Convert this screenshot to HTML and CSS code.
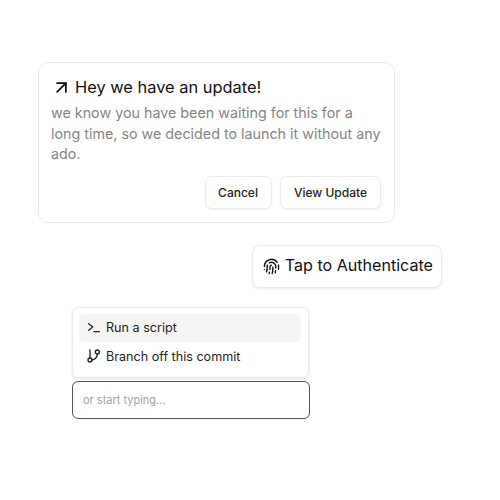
FILE: index.html
```html
<!DOCTYPE html>
<html lang="en">
<head>
    <meta charset="UTF-8">
    <title>Update dialog</title>
    <link rel="stylesheet" href="styles.css">
</head>
<body>
    <div class="page">
        <div class="card">
            <h2 class="card-title">
                <svg class="icon-arrow" viewBox="0 0 24 24"><path d="M7 7h10v10"/><path d="M7 17 17 7"/></svg>
                Hey we have an update!
            </h2>
            <p class="card-text">we know you have been waiting for this for a long time, so we decided to launch it without any ado.</p>
            <div class="card-actions">
                <button class="btn btn-cancel">Cancel</button>
                <button class="btn btn-view">View Update</button>
            </div>
        </div>

        <div class="auth-row">
            <button class="auth-btn">
                <svg class="icon-finger" viewBox="0 0 24 24">
                    <path d="M12 10a2 2 0 0 0-2 2c0 1.02-.1 2.51-.26 4"/>
                    <path d="M14 13.12c0 2.38 0 6.38-1 8.88"/>
                    <path d="M17.29 21.02c.12-.6.43-2.3.5-3.02"/>
                    <path d="M2 12a10 10 0 0 1 18-6"/>
                    <path d="M2 16h.01"/>
                    <path d="M21.8 16c.2-2 .131-5.354 0-6"/>
                    <path d="M5 19.5C5.5 18 6 15 6 12a6 6 0 0 1 .34-2"/>
                    <path d="M8.65 22c.21-.66.45-1.32.57-2"/>
                    <path d="M9 6.8a6 6 0 0 1 9 5.2v2"/>
                </svg>
                Tap to Authenticate
            </button>
        </div>

        <div class="command">
            <div class="menu">
                <div class="menu-item active">
                    <svg class="icon-menu" viewBox="0 0 24 24"><path d="m4 17 6-5-6-5"/><path d="M12 19h8"/></svg>
                    Run a script
                </div>
                <div class="menu-item">
                    <svg class="icon-menu" viewBox="0 0 24 24"><path d="M6 15V3"/><path d="M17 9a9 9 0 0 1-9 9"/><circle cx="17" cy="6" r="3"/><circle cx="6" cy="18" r="3"/></svg>
                    Branch off this commit
                </div>
            </div>
            <div class="command-input">or start typing...</div>
        </div>
    </div>
</body>
</html>
```

FILE: styles.css
```css
* {
    box-sizing: border-box;
}
body {
    margin: 0;
    font-family: Inter, "Liberation Sans", sans-serif;
    background-color: white;
    color: #111;
}
svg {
    fill: none;
    stroke: currentColor;
    stroke-width: 2;
    stroke-linecap: round;
    stroke-linejoin: round;
    flex-shrink: 0;
}
.page {
    padding: 62px 58px 0 38px;
}
.card {
    width: 357px;
    height: 161px;
    padding: 12px 13px 12px 12px;
    background-color: white;
    border: 1px solid #ebebeb;
    border-radius: 10px;
}
.card-title {
    display: flex;
    align-items: center;
    gap: 3px;
    margin: 0;
    height: 24px;
    font-size: 16.4px;
    font-weight: 400;
}
.icon-arrow {
    width: 21px;
    height: 21px;
}
.card-text {
    margin: 4px 0 0;
    font-size: 14.3px;
    line-height: 20.6px;
    color: #858585;
}
.card-actions {
    display: flex;
    justify-content: flex-end;
    gap: 8px;
    margin-top: 11px;
}
.btn {
    height: 33px;
    padding: 0 13px;
    font-family: inherit;
    font-size: 12px;
    font-weight: 500;
    color: #222;
    background-color: white;
    border: 1px solid #ebebeb;
    border-radius: 7px;
    box-shadow: 0 1px 2px rgba(0,0,0,0.05);
}
.btn-cancel {
    padding-left: 12px;
}
.auth-row {
    display: flex;
    justify-content: flex-end;
    margin-top: 22px;
}
.auth-btn {
    display: flex;
    align-items: center;
    gap: 5px;
    height: 43px;
    padding: 0 8px 3px 10px;
    font-family: inherit;
    font-size: 16.1px;
    font-weight: 400;
    color: #111;
    background-color: white;
    border: 1px solid #ebebeb;
    border-radius: 8px;
    box-shadow: 0 1px 3px rgba(0,0,0,0.08);
}
.icon-finger {
    width: 17px;
    height: 17px;
    margin-top: 3px;
}
.command {
    width: 238px;
    margin: 19px 0 0 34px;
}
.menu {
    margin-right: 1px;
    padding: 6px 7px 6px 6px;
    height: 71px;
    background-color: white;
    border: 1px solid #ebebeb;
    border-radius: 6px;
    box-shadow: 0 1px 3px rgba(0,0,0,0.1);
}
.menu-item {
    display: flex;
    align-items: center;
    gap: 4px;
    height: 28px;
    padding: 0 7px;
    font-size: 12.6px;
    color: #222;
    border-radius: 5px;
}
.menu-item.active {
    padding-bottom: 2px;
    background-color: #f6f5f3;
}
.icon-menu {
    width: 16px;
    height: 16px;
}
.command-input {
    display: flex;
    align-items: center;
    height: 38px;
    margin-top: 3px;
    padding: 0 10px;
    font-size: 11px;
    color: #a3a3a3;
    background-color: white;
    border: 1px solid #555;
    border-radius: 6px;
}
```
